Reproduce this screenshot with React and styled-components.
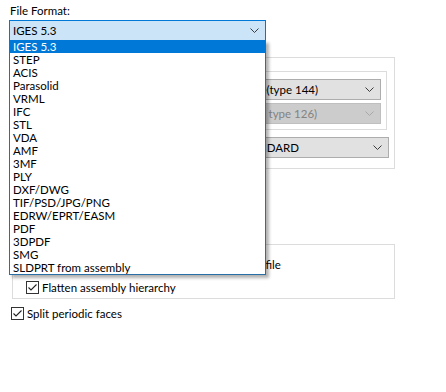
import React from 'react';
import styled, { createGlobalStyle } from 'styled-components';

const GlobalStyle = createGlobalStyle`
  html, body {
    margin: 0;
    padding: 0;
    background: #ffffff;
  }
  body {
    font-family: Lato, "Noto Sans", sans-serif;
    font-size: 11.5px;
    color: #000;
  }
`;

const Page = styled.div`
  width: 446px;
  height: 392px;
  box-sizing: border-box;
  padding: 3px 0 0 9px;
  overflow: hidden;
`;

const FieldLabel = styled.div`
  height: 17px;
  line-height: 15px;
  padding-left: 1px;
`;

const FormatCombo = styled.div`
  position: relative;
  width: 257px;
  height: 21px;
  box-sizing: border-box;
  border: 1px solid #0078d7;
  background: #cce4f7;
  display: flex;
  align-items: center;
  padding-left: 3px;
  z-index: 10;
`;

const ComboText = styled.span`
  flex: 1;
  white-space: nowrap;
  overflow: hidden;
  line-height: 18px;
  color: ${p => (p.$disabled ? '#838383' : '#000')};
`;

const Chevron = ({ color = '#3c3c3c' }) => (
  <svg width="9" height="5" viewBox="0 0 9 5" style={{ marginRight: 6, flexShrink: 0 }}>
    <path d="M0.5 0.5 L4.5 4.5 L8.5 0.5" fill="none" stroke={color} strokeWidth="1" />
  </svg>
);

const DropList = styled.ul`
  position: absolute;
  top: 100%;
  left: -1px;
  width: 257px;
  margin: 0;
  padding: 0;
  list-style: none;
  box-sizing: border-box;
  background: #fff;
  border: 1px solid #2a6ea6;
  border-top: none;
  box-shadow: 3px 3px 3px rgba(0, 0, 0, 0.3);
`;

const DropItem = styled.li`
  height: 13px;
  line-height: 14px;
  padding-left: 3px;
  white-space: nowrap;
  background: ${p => (p.$active ? '#0078d7' : 'transparent')};
  color: ${p => (p.$active ? '#fff' : '#000')};
`;

const Options = styled.div`
  margin: 16px 0 0 3px;
  width: 383px;
`;

const GroupBox = styled.div`
  box-sizing: border-box;
  border: 1px solid #dcdcdc;
  padding: ${p => p.$pad || '0'};
  height: ${p => p.$h};
  display: flex;
  flex-direction: column;
  gap: ${p => p.$gap || '0'};
`;

const InnerBox = styled.div`
  box-sizing: border-box;
  border: 1px solid #dcdcdc;
  height: 59px;
  margin-right: 7px;
  padding: 7px 5px 0 0;
  display: flex;
  flex-direction: column;
  gap: 3px;
`;

const FieldRow = styled.div`
  display: flex;
  align-items: center;
  padding-left: ${p => p.$indent || '0'};
  margin-right: ${p => p.$right || '0'};
`;

const Select = styled.div`
  flex: 1;
  height: 21px;
  box-sizing: border-box;
  border: 1px solid ${p => (p.$disabled ? '#bfbfbf' : '#adadad')};
  background: ${p => (p.$disabled ? '#cccccc' : '#e1e1e1')};
  display: flex;
  align-items: center;
  padding-left: 3px;
`;

const CheckRow = styled.label`
  display: flex;
  align-items: center;
  gap: 3px;
  height: 13px;
  padding-left: ${p => p.$indent || '0'};
  white-space: nowrap;
`;

const Box = styled.span`
  width: 13px;
  height: 13px;
  box-sizing: border-box;
  border: 1px solid #333;
  background: #fff;
  display: inline-flex;
  align-items: center;
  justify-content: center;
  flex-shrink: 0;
`;

const Check = ({ label, indent, checked = true }) => (
  <CheckRow $indent={indent}>
    <Box>
      {checked && (
        <svg width="11" height="11" viewBox="0 0 11 11">
          <path d="M1.5 5.5 L4 8 L9.5 2.5" fill="none" stroke="#222" strokeWidth="1.1" />
        </svg>
      )}
    </Box>
    <span>{label}</span>
  </CheckRow>
);

const Spacer = styled.div`
  height: 75px;
`;

const SplitRow = styled.div`
  margin: 8px 0 0 -1px;
`;

const formats = [
  'IGES 5.3', 'STEP', 'ACIS', 'Parasolid', 'VRML', 'IFC', 'STL', 'VDA', 'AMF',
  '3MF', 'PLY', 'DXF/DWG', 'TIF/PSD/JPG/PNG', 'EDRW/EPRT/EASM', 'PDF', '3DPDF',
  'SMG', 'SLDPRT from assembly',
];

export default function App() {
  return (
    <Page>
      <GlobalStyle />
      <FieldLabel>File Format:</FieldLabel>
      <FormatCombo>
        <ComboText>IGES 5.3</ComboText>
        <Chevron />
        <DropList>
          {formats.map((f, i) => (
            <DropItem key={f} $active={i === 0}>{f}</DropItem>
          ))}
        </DropList>
      </FormatCombo>

      <Options>
        <GroupBox $h="112px" $pad="13px 0 0 8px" $gap="7px">
          <InnerBox>
            <FieldRow $indent="157px">
              <Select>
                <ComboText>Trimmed surface(type 144)</ComboText>
                <Chevron />
              </Select>
            </FieldRow>
            <FieldRow $indent="161px">
              <Select $disabled>
                <ComboText $disabled>BSplines (Entity type 126)</ComboText>
                <Chevron color="#a8a8a8" />
              </Select>
            </FieldRow>
          </InnerBox>
          <FieldRow $indent="213px" $right="5px">
            <Select>
              <ComboText>STANDARD</ComboText>
              <Chevron />
            </Select>
          </FieldRow>
        </GroupBox>

        <Spacer />

        <GroupBox $h="55px" $pad="13px 0 0 0" $gap="10px">
          <Check indent="18px" label="Save all components of an assembly to one file" />
          <Check indent="13px" label="Flatten assembly hierarchy" />
        </GroupBox>

        <SplitRow>
          <Check label="Split periodic faces" />
        </SplitRow>
      </Options>
    </Page>
  );
}
